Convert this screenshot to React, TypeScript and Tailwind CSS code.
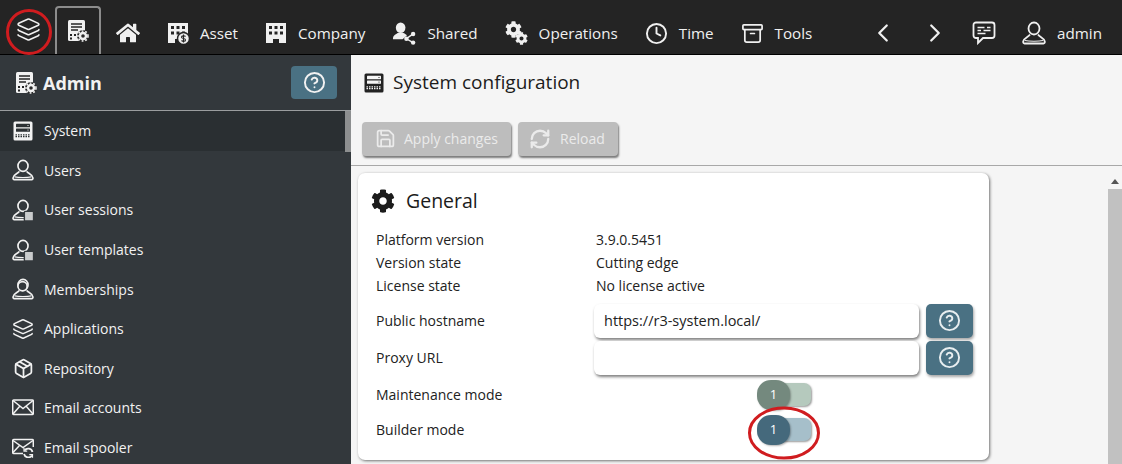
import { ReactNode } from "react";
import {
  Archive,
  ChevronLeft,
  ChevronRight,
  CircleHelp,
  Clock,
  Layers,
  Package,
  RefreshCw,
  Save,
} from "lucide-react";
import { FaCog, FaHome } from "react-icons/fa";

const Person = ({ size = 24, extra }: { size?: number; extra?: ReactNode }) => (
  <svg width={size} height={size} viewBox="0 0 24 24" fill="none" stroke="currentColor" strokeWidth="1.800">
    <ellipse cx="12" cy="7.500" rx="5.500" ry="6" />
    <path d="M8 13.500C6.500 16 2 16.500 1.200 20.500c-.2 1 .3 2 1.300 2h19c1 0 1.500-1 1.300-2C22 16.500 17.500 16 16 13.500" />
    <path d="M3 19.500c4 1 14 1 18 0" strokeWidth="1.200" />
    {extra}
  </svg>
);

const ServerGear = () => (
  <svg width="24" height="24" viewBox="0 0 24 24">
    <rect x="2" y="1" width="17" height="21" rx="1.500" fill="currentColor" />
    <path d="M5 5h11M5 8h11M5 11h7" stroke="#242424" strokeWidth="1.500" />
    <path d="M4 15h2v2H4zM8 15h2v2H8zM4 18.500h2v2H4z" fill="#242424" />
    <circle cx="17" cy="17" r="6" fill="#2a2a2a" />
    <circle cx="17" cy="17" r="3" fill="none" stroke="currentColor" strokeWidth="2.400" />
    <circle cx="17" cy="17" r="5" fill="none" stroke="currentColor" strokeWidth="1.600" strokeDasharray="1.800 1.800" />
  </svg>
);

const ServerIcon = ({ dark }: { dark?: boolean }) => {
  const ink = dark ? "#f5f5f5" : "#2b3033";
  return (
    <svg width="20" height="20" viewBox="0 0 20 20">
      <rect x="0.500" y="0.500" width="19" height="19" rx="1.500" fill="currentColor" />
      <rect x="3" y="2.800" width="14" height="3.400" rx="0.500" fill={ink} />
      <rect x="3" y="7.400" width="14" height="3.400" rx="0.500" fill={ink} />
      <path d="M14.500 4.500h1M14.500 9.100h1" stroke="currentColor" strokeWidth="1" />
      <path d="M2.500 13.800h15M2.500 15.700h15" stroke={ink} strokeWidth="1.200" strokeDasharray="1.500 1" />
    </svg>
  );
};

const Building = ({ dollar }: { dollar?: boolean }) => (
  <svg width="22" height="22" viewBox="0 0 22 22">
    <path
      fillRule="evenodd"
      fill="currentColor"
      d="M1 1h20v20h-7v-4H8v4H1zM4 4v3h3V4zM9.500 4v3h3V4zM15 4v3h3V4zM4 9.500v3h3v-3zM9.500 9.500v3h3v-3zM15 9.500v3h3v-3z"
    />
    {dollar && (
      <>
        <circle cx="16.500" cy="16.500" r="6" fill="currentColor" stroke="#242424" strokeWidth="1.500" />
        <path d="M18.500 14.500c-1-1-4-1-4 .8s4 .7 4 2.600-3 1.600-4 .6M16.500 12.500v8" fill="none" stroke="#242424" strokeWidth="1.100" />
      </>
    )}
  </svg>
);

const SharedIcon = () => (
  <svg width="24" height="24" viewBox="0 0 25 24" fill="currentColor">
    <ellipse cx="9" cy="6.500" rx="5" ry="5.500" />
    <path d="M1 18c0-4 4-5 5-6h6c1.500 .8 3 1.500 3.500 2.500L11 18.500H1z" />
    <circle cx="22" cy="13" r="2.300" />
    <circle cx="15" cy="18" r="2.300" />
    <circle cx="22" cy="22" r="2.300" />
    <path d="M22 13l-7 5 7 4" fill="none" stroke="currentColor" strokeWidth="1.500" />
  </svg>
);

const CommentIcon = () => (
  <svg width="24" height="24" viewBox="0 0 24 24" fill="none" stroke="currentColor" strokeWidth="1.800">
    <path d="M4 1.500h16a2.500 2.500 0 0 1 2.500 2.500v10.500a2.500 2.500 0 0 1-2.500 2.500H11l-5 5v-5H4a2.500 2.500 0 0 1-2.500-2.500V4A2.500 2.500 0 0 1 4 1.500z" />
    <path d="M5.500 6.500h7M15 6.500h3.500M5.500 9.500h3.500M11.500 9.500h7M5.500 12.500h8" strokeWidth="1.600" />
  </svg>
);

const Gears = () => (
  <div className="relative h-[24px] w-[23px]">
    <FaCog size={17} className="absolute left-0 top-0" />
    <FaCog size={13} className="absolute bottom-0 right-0" />
  </div>
);

const MailIcon = ({ refresh }: { refresh?: boolean }) => (
  <svg width="22" height="20" viewBox="0 0 22 20" fill="none" stroke="currentColor" strokeWidth="1.500">
    <path d={refresh ? "M11 15.500H1.700a1 1 0 0 1-1-1V2.500a1 1 0 0 1 1-1h18.600a1 1 0 0 1 1 1V9" : "M1.700 2h18.600a1 1 0 0 1 1 1v12.500a1 1 0 0 1-1 1H1.700a1 1 0 0 1-1-1V3a1 1 0 0 1 1-1z"} />
    <path d={refresh ? "M1 2.500l10 7 10-7M1 14.500l6.500-7" : "M1 2.500l10 8 10-8M1 16l7-8M21 16l-7-8"} />
    {refresh && (
      <>
        <path d="M20.500 14a4.500 4.500 0 0 0-8-1.500M12 16a4.500 4.500 0 0 0 8 1.500" strokeWidth="1.800" />
        <path d="M12 10v3.200h3.200M20.500 19.800v-3.200h-3.200" strokeWidth="1.200" />
      </>
    )}
  </svg>
);

const TopItem = ({ icon, label }: { icon: ReactNode; label?: string }) => (
  <div className="flex items-center gap-[11px] px-[13.500px]">
    {icon}
    {label && <span>{label}</span>}
  </div>
);

const badge = <rect x="13.500" y="13.500" width="10" height="10.500" rx="1" fill="#c9cbcc" stroke="#33383c" strokeWidth="1.500" />;

const menu: { label: string; icon: ReactNode; active?: boolean }[] = [
  { label: "System", icon: <ServerIcon />, active: true },
  { label: "Users", icon: <Person size={22} /> },
  { label: "User sessions", icon: <Person size={22} extra={badge} /> },
  { label: "User templates", icon: <Person size={22} extra={badge} /> },
  {
    label: "Memberships",
    icon: <Person size={22} extra={<circle cx="11.500" cy="9" r="5" fill="#33383c" stroke="currentColor" />} />,
  },
  { label: "Applications", icon: <Layers size={22} strokeWidth={1.600} /> },
  { label: "Repository", icon: <Package size={21} strokeWidth={2} /> },
  { label: "Email accounts", icon: <MailIcon /> },
  { label: "Email spooler", icon: <MailIcon refresh /> },
];

const info = [
  ["Platform version", "3.9.0.5451"],
  ["Version state", "Cutting edge"],
  ["License state", "No license active"],
];

const HelpBtn = () => (
  <button type="button" className="flex h-[34px] w-[47px] items-center justify-center rounded-[5px] bg-[#4a7183] text-[#e8eef0] shadow-[1px_2px_3px_rgba(0,0,0,0.35)]">
    <CircleHelp size={23} strokeWidth={2} />
  </button>
);

const Field = ({ label, value }: { label: string; value?: string }) => (
  <div className="flex h-[37px] items-center">
    <span className="w-[218px]">{label}</span>
    <div className="flex h-[34px] w-[325px] items-center rounded-[6px] bg-white px-[10px] text-[14.500px] text-[#222] shadow-[1px_2px_3px_rgba(0,0,0,0.5)]">
      {value}
    </div>
    <div className="ml-[7px]">
      <HelpBtn />
    </div>
  </div>
);

const Toggle = ({ label, knob, track }: { label: string; knob: string; track: string }) => (
  <div className="flex h-[35px] items-center">
    <span className="w-[381px]">{label}</span>
    <div className="relative flex h-[30px] w-[54px] items-center">
      <div className={`ml-[4px] h-[23px] w-[50px] rounded-[7px] shadow-[1px_1px_2px_rgba(0,0,0,0.4)] ${track}`} />
      <div className={`absolute left-0 top-0 flex h-[30px] w-[33px] items-center justify-center rounded-[14px] text-[13px] text-white shadow-[1px_1px_2px_rgba(0,0,0,0.3)] ${knob}`}>
        1
      </div>
    </div>
  </div>
);

export default function App() {
  return (
    <div className="relative flex h-[464px] w-[1122px] flex-col overflow-hidden bg-[#f5f5f5] font-['Open_Sans','Noto_Sans',sans-serif]">
      <header className="flex h-[55px] shrink-0 items-stretch border-b border-black bg-[#242424] pl-[11px] text-[15.200px] text-[#f0f0f0]">
        <div className="flex w-[34px] items-center justify-center pt-[4px]">
          <Layers size={25} strokeWidth={1.500} />
        </div>
        <div className="ml-[10px] mt-[6px] flex w-[46px] items-center justify-center rounded-t-[4px] border-x-2 border-t-2 border-[#8c8c8c]">
          <ServerGear />
        </div>
        <div className="flex items-center pl-[1.500px] pt-[12px]">
          <TopItem icon={<FaHome size={24} />} />
          <TopItem icon={<Building dollar />} label="Asset" />
          <TopItem icon={<Building />} label="Company" />
          <TopItem icon={<SharedIcon />} label="Shared" />
          <TopItem icon={<Gears />} label="Operations" />
          <TopItem icon={<Clock size={23} strokeWidth={2} />} label="Time" />
          <TopItem icon={<Archive size={23} strokeWidth={1.800} />} label="Tools" />
        </div>
        <div className="ml-auto flex items-center gap-[22px] pr-[20px] pt-[12px]">
          <ChevronLeft size={30} strokeWidth={1.800} />
          <ChevronRight size={30} strokeWidth={1.800} />
          <CommentIcon />
          <div className="ml-[4px] flex items-center gap-[11px]">
            <Person />
            <span>admin</span>
          </div>
        </div>
      </header>

      <div className="flex min-h-0 flex-1">
        <aside className="flex w-[351px] shrink-0 flex-col bg-[#33383c] text-[#f2f2f2]">
          <div className="flex h-[56px] shrink-0 items-center border-b border-[#9a9d9f] px-[14px]">
            <ServerGear />
            <span className="ml-[5px] pt-[1px] text-[18px] font-bold">Admin</span>
            <button type="button" className="ml-auto flex h-[33px] w-[46px] items-center justify-center rounded-[4px] bg-[#4a7183]">
              <CircleHelp size={23} strokeWidth={2} />
            </button>
          </div>
          <div className="flex min-h-0 flex-1">
            <nav className="flex-1 overflow-hidden">
              {menu.map((m) => (
                <div key={m.label} className={`flex h-[39.600px] items-center text-[14px] ${m.active ? "bg-[#2a2f32]" : ""}`}>
                  <div className="flex w-[44px] justify-center pl-[2px]">{m.icon}</div>
                  <span>{m.label}</span>
                </div>
              ))}
            </nav>
            <div className="w-[6px] shrink-0">
              <div className="h-[41px] bg-[#8d8f90]" />
            </div>
          </div>
        </aside>

        <main className="flex min-w-0 flex-1 flex-col">
          <div className="flex h-[56px] shrink-0 items-center gap-[9px] pl-[13px] pb-[1px] text-[19px] text-[#1c1c1c]">
            <span className="text-[#222]">
              <ServerIcon dark />
            </span>
            <span>System configuration</span>
          </div>
          <div className="flex h-[55px] shrink-0 items-start gap-[7px] border-b border-[#a8a8a8] pl-[11px] pt-[11px] text-[14px] text-[#ebebeb]">
            <button type="button" className="flex h-[34px] w-[149px] items-center gap-[8px] rounded-[4px] bg-[#bdbdbd] pb-[1px] pl-[13px] shadow-[1px_2px_2px_rgba(0,0,0,0.5)]">
              <Save size={21} strokeWidth={2} />
              <span>Apply changes</span>
            </button>
            <button type="button" className="flex h-[34px] w-[100px] items-center gap-[9px] rounded-[4px] bg-[#bdbdbd] pb-[1px] pl-[11px] shadow-[1px_2px_2px_rgba(0,0,0,0.5)]">
              <RefreshCw size={22} strokeWidth={2.500} />
              <span>Reload</span>
            </button>
          </div>
          <div className="flex min-h-0 flex-1 pt-[7px]">
            <div className="ml-[7px] flex h-[287px] w-[631px] flex-col rounded-[7px] bg-white pl-[13px] text-[14px] text-[#222] shadow-[1px_1px_3px_rgba(0,0,0,0.55)]">
              <div className="flex h-[55px] shrink-0 items-center gap-[11px] text-[19.500px] text-[#1c1c1c]">
                <FaCog size={24} />
                <span>General</span>
              </div>
              <div className="pl-[5px]">
                {info.map(([k, v]) => (
                  <div key={k} className="flex h-[23px] items-center">
                    <span className="w-[220px]">{k}</span>
                    <span>{v}</span>
                  </div>
                ))}
                <div className="h-[5px]" />
                <Field label="Public hostname" value="https://r3-system.local/" />
                <Field label="Proxy URL" />
                <div className="h-[1px]" />
                <Toggle label="Maintenance mode" knob="bg-[#74897e]" track="bg-[#b5c9bd]" />
                <Toggle label="Builder mode" knob="bg-[#45697c]" track="bg-[#a6bfca]" />
              </div>
            </div>
            <div className="ml-auto flex w-[14px] flex-col items-center">
              <span className="mt-[6px] h-0 w-0 border-x-[4px] border-b-[5px] border-x-transparent border-b-[#555]" />
              <div className="mt-[5px] w-full flex-1 bg-[#c1c1c1]" />
            </div>
          </div>
        </main>
      </div>

      <svg className="absolute left-[5px] top-[8px]" width="50" height="50" viewBox="0 0 50 50" fill="none">
        <circle cx="24" cy="24" r="21.500" stroke="#d01c1f" strokeWidth="3" />
      </svg>
      <svg className="absolute left-[744px] top-[402px]" width="80" height="62" viewBox="0 0 80 62" fill="none">
        <ellipse cx="40" cy="31" rx="34.500" ry="25" stroke="#d01c1f" strokeWidth="3" />
      </svg>
    </div>
  );
}
